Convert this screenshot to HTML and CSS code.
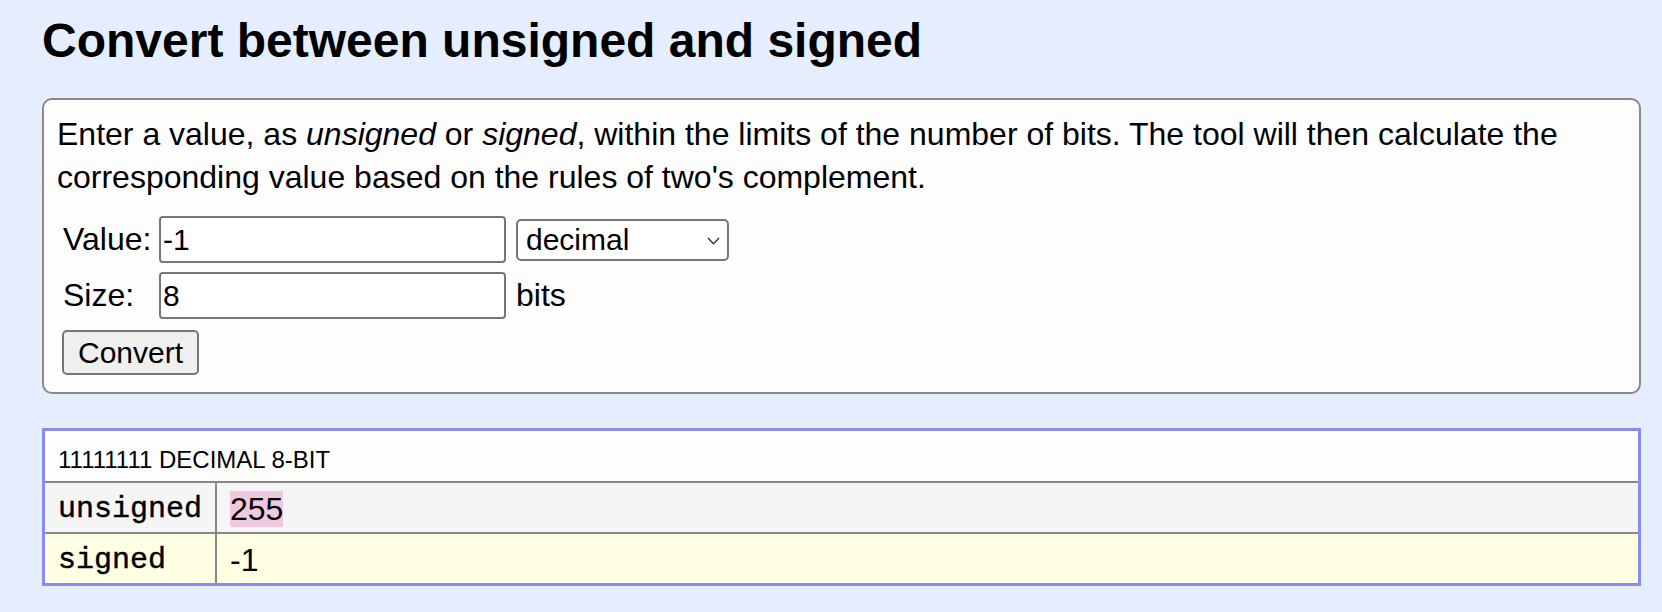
FILE: index.html
```html
<!DOCTYPE html>
<html lang="en">
<head>
<meta charset="utf-8">
<title>Convert between unsigned and signed</title>
<link rel="stylesheet" href="styles.css">
</head>
<body>
<main class="page">
  <h1 class="title">Convert between unsigned and signed</h1>
  <section class="panel">
    <p class="intro">Enter a value, as <em>unsigned</em> or <em>signed</em>, within the limits of the number of bits. The tool will then calculate the corresponding value based on the rules of two's complement.</p>
    <form class="form">
      <label class="lbl" for="val">Value:</label>
      <input class="field" id="val" type="text" value="-1">
      <div class="select-wrap">
        <select class="select">
          <option selected>decimal</option>
          <option>hexadecimal</option>
          <option>binary</option>
        </select>
        <svg class="chev" width="13" height="8" viewBox="0 0 13 8"><polyline points="1,1 6.5,6.8 12,1" fill="none" stroke="#333" stroke-width="1.4"/></svg>
      </div>
      <label class="lbl" for="size">Size:</label>
      <input class="field" id="size" type="text" value="8">
      <span class="unit">bits</span>
      <button class="btn" type="button">Convert</button>
    </form>
  </section>
  <table class="result">
    <tr>
      <td class="head" colspan="2">11111111 DECIMAL 8-BIT</td>
    </tr>
    <tr class="row-unsigned">
      <td class="key">unsigned</td>
      <td class="val"><span class="hl">255</span></td>
    </tr>
    <tr class="row-signed">
      <td class="key">signed</td>
      <td class="val">-1</td>
    </tr>
  </table>
</main>
</body>
</html>
```

FILE: styles.css
```css
html, body {
  margin: 0;
  padding: 0;
}
body {
  background: #e4eefe;
  font-family: "Liberation Sans", Arial, Helvetica, sans-serif;
  color: #000;
}
.page {
  padding: 13px 21px 20px 42px;
}
.title {
  margin: 0;
  font-size: 48px;
  line-height: 55px;
  font-weight: bold;
}
.panel {
  margin-top: 30px;
  border: 2px solid #888;
  border-radius: 10px;
  background: #fdfdfd;
  padding: 13px 13px 17px;
}
.intro {
  margin: 0;
  font-size: 32px;
  line-height: 43px;
}
.form {
  margin: 17px 0 0 6px;
  display: grid;
  grid-template-columns: 86px 347px auto;
  column-gap: 10px;
  row-gap: 9px;
  align-items: center;
  justify-items: start;
  font-size: 32px;
}
.lbl {
  font-size: 32px;
  white-space: nowrap;
}
.field {
  box-sizing: border-box;
  width: 347px;
  height: 47px;
  border: 2px solid #767676;
  border-radius: 4px;
  padding: 0 2px;
  margin: 0;
  font-family: "Liberation Sans", Arial, sans-serif;
  font-size: 30px;
  background: #fff;
  color: #000;
}
.select-wrap {
  position: relative;
  width: 213px;
  height: 42px;
}
.select {
  -webkit-appearance: none;
  appearance: none;
  box-sizing: border-box;
  width: 213px;
  height: 42px;
  margin: 0;
  border: 2px solid #767676;
  border-radius: 5px;
  padding: 0 8px;
  background: #fff;
  font-family: "Liberation Sans", Arial, sans-serif;
  font-size: 30px;
  color: #000;
}
.chev {
  position: absolute;
  left: 191px;
  top: 18px;
  pointer-events: none;
}
.unit {
  font-size: 32px;
}
.btn {
  grid-column: 1 / span 2;
  box-sizing: border-box;
  height: 45px;
  margin: 2px 0 0 -1px;
  padding: 0 14px;
  border: 2px solid #767676;
  border-radius: 5px;
  background: #efefef;
  font-family: "Liberation Sans", Arial, sans-serif;
  font-size: 30px;
  color: #000;
}
.result {
  margin-top: 34px;
  width: 100%;
  border: 3px solid #8a8af6;
  border-collapse: separate;
  border-spacing: 0;
  background: #fdfdfd;
}
.result td {
  padding: 9px 12px 5px 13px;
  line-height: 35px;
  font-family: "Liberation Sans", Arial, sans-serif;
  font-size: 32px;
  vertical-align: middle;
}
.result .head {
  font-size: 24px;
  line-height: 28px;
  padding: 15px 13px 7px;
  border-bottom: 2px solid #888;
  background: #fdfdfd;
}
.result .key {
  width: 145px;
  font-family: "Liberation Mono", "Courier New", monospace;
  font-size: 30px;
  -webkit-text-stroke: 0.4px #000;
  border-right: 2px solid #888;
}
.result .val {
  font-family: "Liberation Sans", Arial, sans-serif;
  font-size: 32px;
}
.row-unsigned td {
  background: #f5f5f5;
  border-bottom: 2px solid #888;
}
.row-signed td {
  background: #ffffe3;
}
.hl {
  background: #f0c8e0;
}
```
